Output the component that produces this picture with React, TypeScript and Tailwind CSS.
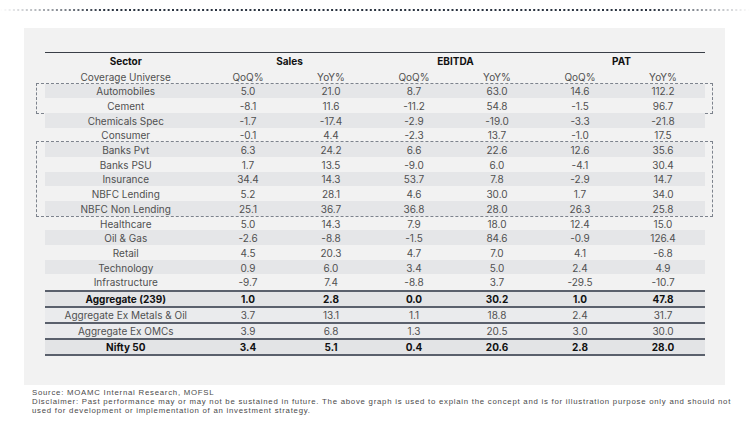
import React from "react";

type Row = { name: string; vals: string[]; bold?: boolean };

const sectors: Row[] = [
  { name: "Automobiles", vals: ["5.0", "21.0", "8.7", "63.0", "14.6", "112.2"] },
  { name: "Cement", vals: ["-8.1", "11.6", "-11.2", "54.8", "-1.5", "96.7"] },
  { name: "Chemicals Spec", vals: ["-1.7", "-17.4", "-2.9", "-19.0", "-3.3", "-21.8"] },
  { name: "Consumer", vals: ["-0.1", "4.4", "-2.3", "13.7", "-1.0", "17.5"] },
  { name: "Banks Pvt", vals: ["6.3", "24.2", "6.6", "22.6", "12.6", "35.6"] },
  { name: "Banks PSU", vals: ["1.7", "13.5", "-9.0", "6.0", "-4.1", "30.4"] },
  { name: "Insurance", vals: ["34.4", "14.3", "53.7", "7.8", "-2.9", "14.7"] },
  { name: "NBFC Lending", vals: ["5.2", "28.1", "4.6", "30.0", "1.7", "34.0"] },
  { name: "NBFC Non Lending", vals: ["25.1", "36.7", "36.8", "28.0", "26.3", "25.8"] },
  { name: "Healthcare", vals: ["5.0", "14.3", "7.9", "18.0", "12.4", "15.0"] },
  { name: "Oil & Gas", vals: ["-2.6", "-8.8", "-1.5", "84.6", "-0.9", "126.4"] },
  { name: "Retail", vals: ["4.5", "20.3", "4.7", "7.0", "4.1", "-6.8"] },
  { name: "Technology", vals: ["0.9", "6.0", "3.4", "5.0", "2.4", "4.9"] },
  { name: "Infrastructure", vals: ["-9.7", "7.4", "-8.8", "3.7", "-29.5", "-10.7"] },
];

const summary: Row[] = [
  { name: "Aggregate (239)", vals: ["1.0", "2.8", "0.0", "30.2", "1.0", "47.8"], bold: true },
  { name: "Aggregate Ex Metals & Oil", vals: ["3.7", "13.1", "1.1", "18.8", "2.4", "31.7"] },
  { name: "Aggregate Ex OMCs", vals: ["3.9", "6.8", "1.3", "20.5", "3.0", "30.0"] },
  { name: "Nifty 50", vals: ["3.4", "5.1", "0.4", "20.6", "2.8", "28.0"], bold: true },
];

const cols = "grid grid-cols-[161.5px_repeat(6,83px)] items-center text-center";

function SectorRow({ row, index }: { row: Row; index: number }) {
  return (
    <div className={`${cols} h-[14.7px] pt-px ${index % 2 === 0 ? "bg-[#e5e6e8]" : ""}`}>
      <div>{row.name}</div>
      {row.vals.map((v, i) => (
        <div key={i}>{v}</div>
      ))}
    </div>
  );
}

function Group({ from, to, dashed }: { from: number; to: number; dashed?: boolean }) {
  return (
    <div className="relative">
      {dashed && (
        <div className="pointer-events-none absolute -left-[9px] -right-[8px] -top-[1px] -bottom-[1px] border border-dashed border-[#7d838d]" />
      )}
      {sectors.slice(from, to).map((r, i) => (
        <SectorRow key={r.name} row={r} index={from + i} />
      ))}
    </div>
  );
}

function DottedRule() {
  return (
    <svg width="750" height="4" className="block">
      <defs>
        <linearGradient id="fade" gradientUnits="userSpaceOnUse" x1="0" y1="0" x2="750" y2="0">
          <stop offset="0" stopColor="#2a3340" stopOpacity="0" />
          <stop offset="0.14" stopColor="#2a3340" stopOpacity="1" />
          <stop offset="0.87" stopColor="#2a3340" stopOpacity="1" />
          <stop offset="1" stopColor="#2a3340" stopOpacity="0" />
        </linearGradient>
      </defs>
      <line x1="0" y1="2" x2="750" y2="2" stroke="url(#fade)" strokeWidth="2" strokeDasharray="2 2.3" />
    </svg>
  );
}

export default function App() {
  return (
    <div className="w-[750px] h-[429px] bg-white overflow-hidden font-['Inter',sans-serif]">
      <div className="pt-[8px]">
        <DottedRule />
      </div>

      <div className="mt-[16px] ml-[24px] w-[701px] h-[357px] bg-[#f2f2f2] pt-[24px] px-[21px]">
        <div className="w-[660px] text-[10px] text-[#505050] leading-none">
          <div className="border-t-[1.5px] border-[#3a3f48]" />
          <div className={`${cols} h-[15.5px] pt-px font-bold text-[#111]`}>
            <div>Sector</div>
            <div className="col-span-2">Sales</div>
            <div className="col-span-2">EBITDA</div>
            <div className="col-span-2">PAT</div>
          </div>
          <div className={`${cols} h-[15px] pt-px`}>
            <div>Coverage Universe</div>
            <div>QoQ%</div>
            <div>YoY%</div>
            <div>QoQ%</div>
            <div>YoY%</div>
            <div>QoQ%</div>
            <div>YoY%</div>
          </div>

          <Group from={0} to={2} dashed />
          <Group from={2} to={4} />
          <Group from={4} to={9} dashed />
          <Group from={9} to={14} />

          <div className="mt-[0.5px] border-b-2 border-[#5a606c]">
            {summary.map((r) => (
              <div
                key={r.name}
                className={`${cols} h-[16px] pt-px border-t-2 border-[#5a606c] ${
                  r.bold ? "bg-[#e3e4e6] font-bold text-[#111]" : "bg-[#eaebed]"
                }`}
              >
                <div>{r.name}</div>
                {r.vals.map((v, i) => (
                  <div key={i}>{v}</div>
                ))}
              </div>
            ))}
          </div>
        </div>
      </div>

      <div className="mt-[4px] ml-[32px] font-['Liberation_Sans',sans-serif] text-[7.8px] leading-[8.75px] tracking-[0.75px] text-[#4a4a4a] whitespace-nowrap">
        <div>Source: MOAMC Internal Research, MOFSL</div>
        <div>
          Disclaimer: Past performance may or may not be sustained in future. The above graph is used to explain the concept and is for illustration purpose only and should not
        </div>
        <div>used for development or implementation of an investment strategy.</div>
      </div>
    </div>
  );
}
